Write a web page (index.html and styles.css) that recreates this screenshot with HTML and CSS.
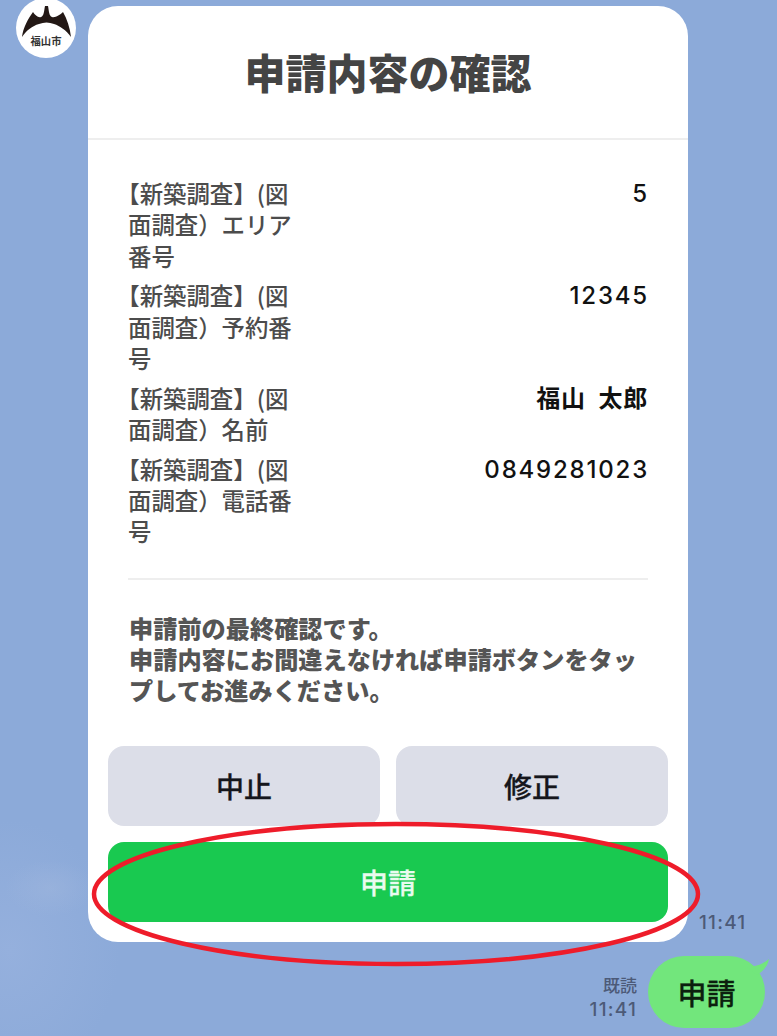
FILE: index.html
```html
<!DOCTYPE html>
<html lang="ja">
<head>
<meta charset="utf-8">
<title>申請内容の確認</title>
<link rel="stylesheet" href="styles.css">
</head>
<body>
<div class="chat">
  <div class="incoming">
    <div class="avatar">
      <svg class="crest" viewBox="0 0 60 60" width="60" height="60" aria-hidden="true">
        <path d="M6 39 C7 30 12 21 17 14 C19 17 22 20 25 19 C28 18 28 13 29 8 L32 8 C33 13 33 18 36 19 C39 20 44 17 47 14 C51 21 54 30 55 39 C50 32 44 28 38 26 C33 24 28 24 23 26 C16 28 11 32 6 39 Z" fill="#231815"/>
      </svg>
      <span class="crest-name">福山市</span>
    </div>
    <article class="card">
      <header class="card-head"><h1>申請内容の確認</h1></header>
      <section class="card-body">
        <dl class="rows">
          <div class="row"><dt><span class="open">【</span>新築調査】(図面調査）エリア番号</dt><dd class="num">5</dd></div>
          <div class="row"><dt><span class="open">【</span>新築調査】(図面調査）予約番号</dt><dd class="num">12345</dd></div>
          <div class="row"><dt><span class="open">【</span>新築調査】(図面調査）名前</dt><dd>福山&nbsp;&nbsp;太郎</dd></div>
          <div class="row"><dt><span class="open">【</span>新築調査】(図面調査）電話番号</dt><dd class="num">0849281023</dd></div>
        </dl>
        <hr class="rule">
        <p class="note">申請前の最終確認です。<br>申請内容にお間違えなければ申請ボタンをタップしてお進みください。</p>
      </section>
      <footer class="actions">
        <div class="pair">
          <button class="btn btn-grey">中止</button>
          <button class="btn btn-grey">修正</button>
        </div>
        <button class="btn btn-green">申請</button>
      </footer>
    </article>
    <time class="stamp">11:41</time>
  </div>
  <div class="outgoing">
    <div class="meta"><span>既読</span><time>11:41</time></div>
    <div class="bubble">申請
      <svg class="tail" viewBox="0 0 22 16" width="22" height="16" aria-hidden="true"><path d="M0 8 C8 8 16 5 22 0 C21 6 17 12 10 16 Z" fill="#72e67c"/></svg>
    </div>
  </div>
  <svg class="ring" viewBox="0 0 777 1036" width="777" height="1036" aria-hidden="true">
    <ellipse cx="396" cy="894" rx="302" ry="70" fill="none" stroke="#ee1c2a" stroke-width="4.5"/>
  </svg>
</div>
</body>
</html>
```
FILE: styles.css
```css
* { box-sizing: border-box; }
html, body { margin: 0; height: 100%; overflow: hidden; }
body {
  font-family: "Noto Sans CJK JP", "Noto Sans", sans-serif;
  background:
    radial-gradient(ellipse 45px 28px at 50px 888px, rgba(157,181,221,0.6) 0%, rgba(157,181,221,0) 100%),
    radial-gradient(ellipse 110px 130px at 10px 950px, #95b0dd 0%, rgba(151,178,222,0) 100%),
    #8caad9;
}
.chat { position: relative; width: 777px; height: 1036px; overflow: hidden; padding-top: 6px; }
.incoming { display: flex; align-items: flex-end; padding-left: 16px; }
.avatar {
  align-self: flex-start;
  position: relative;
  flex: none;
  width: 60px; height: 60px;
  margin: -8px 12px 0 0;
  background: #fff;
  border-radius: 50%;
  display: flex; justify-content: center;
}
.crest { position: absolute; left: 0; top: 0; }
.crest-name { position: absolute; top: 36px; left: 0; right: 0; text-align: center; font-size: 10.3px; line-height: 14px; font-weight: 700; color: #333; }
.card { flex: none; width: 600px; height: 936px; background: #fff; border-radius: 30px; display: flex; flex-direction: column; }
.card-head { height: 134px; border-bottom: 2px solid #eeeeee; display: flex; justify-content: center; padding-top: 34px; }
.card-head h1 { margin: 0; font-size: 41px; line-height: 62px; font-weight: 900; color: #444; }
.card-body { padding: 38px 40px 0; flex: 1; }
.rows { margin: 0; display: flex; flex-direction: column; gap: 8.5px; }
.row { display: flex; justify-content: space-between; }
.row dt { width: 173px; font-size: 23.4px; line-height: 31.3px; font-weight: 500; color: #4c4c4c; }
.open { font-feature-settings: "halt"; }
.row dd { margin: 0; font-size: 24px; line-height: 28px; font-weight: 700; letter-spacing: 0.8px; color: #111; text-align: right; }
.row dd.num { font-family: "Inter", "Noto Sans", sans-serif; font-weight: 500; font-size: 24px; line-height: 32px; letter-spacing: 1.8px; margin-right: -1px; }
.rule { border: 0; height: 2px; background: #eeeeee; margin: 30px 0 0; }
.note { margin: 32px 0 0 1px; font-size: 24.2px; line-height: 31px; font-weight: 900; color: #555; }
.actions { padding: 0 20px 20px; display: flex; flex-direction: column; gap: 16px; }
.pair { display: flex; gap: 16px; }
.btn { display: block; border: 0; height: 80px; border-radius: 16px; font: inherit; font-size: 28px; font-weight: 500; -webkit-text-stroke: 0.3px currentColor; width: 100%; }
.btn-grey { background: #dcdee8; color: #15161c; }
.btn-green { background: #19c950; color: #e9fbef; }
.stamp { margin-left: 11px; margin-bottom: 7px; font-family: "Inter", sans-serif; font-size: 19px; line-height: 24px; font-weight: 500; color: #4c5a78; letter-spacing: 1.2px; }
.outgoing { display: flex; justify-content: flex-end; align-items: flex-end; gap: 11px; margin-top: 14px; padding-right: 12px; }
.meta { display: flex; flex-direction: column; align-items: flex-end; font-family: "Inter", "Noto Sans CJK JP", sans-serif; font-size: 19px; line-height: 26px; font-weight: 500; letter-spacing: 1.2px; color: #4c5a78; margin-bottom: 5px; }
.meta span { font-family: "Noto Sans CJK JP", sans-serif; font-size: 17px; line-height: 24px; letter-spacing: 0; }
.bubble { position: relative; width: 117px; height: 72px; background: #72e67c; border-radius: 36px; display: flex; align-items: center; justify-content: center; font-size: 29px; font-weight: 500; -webkit-text-stroke: 0.3px currentColor; color: #0c1f0e; }
.tail { position: absolute; right: -4px; top: 3px; }
.ring { position: absolute; left: 0; top: 0; pointer-events: none; }
```
